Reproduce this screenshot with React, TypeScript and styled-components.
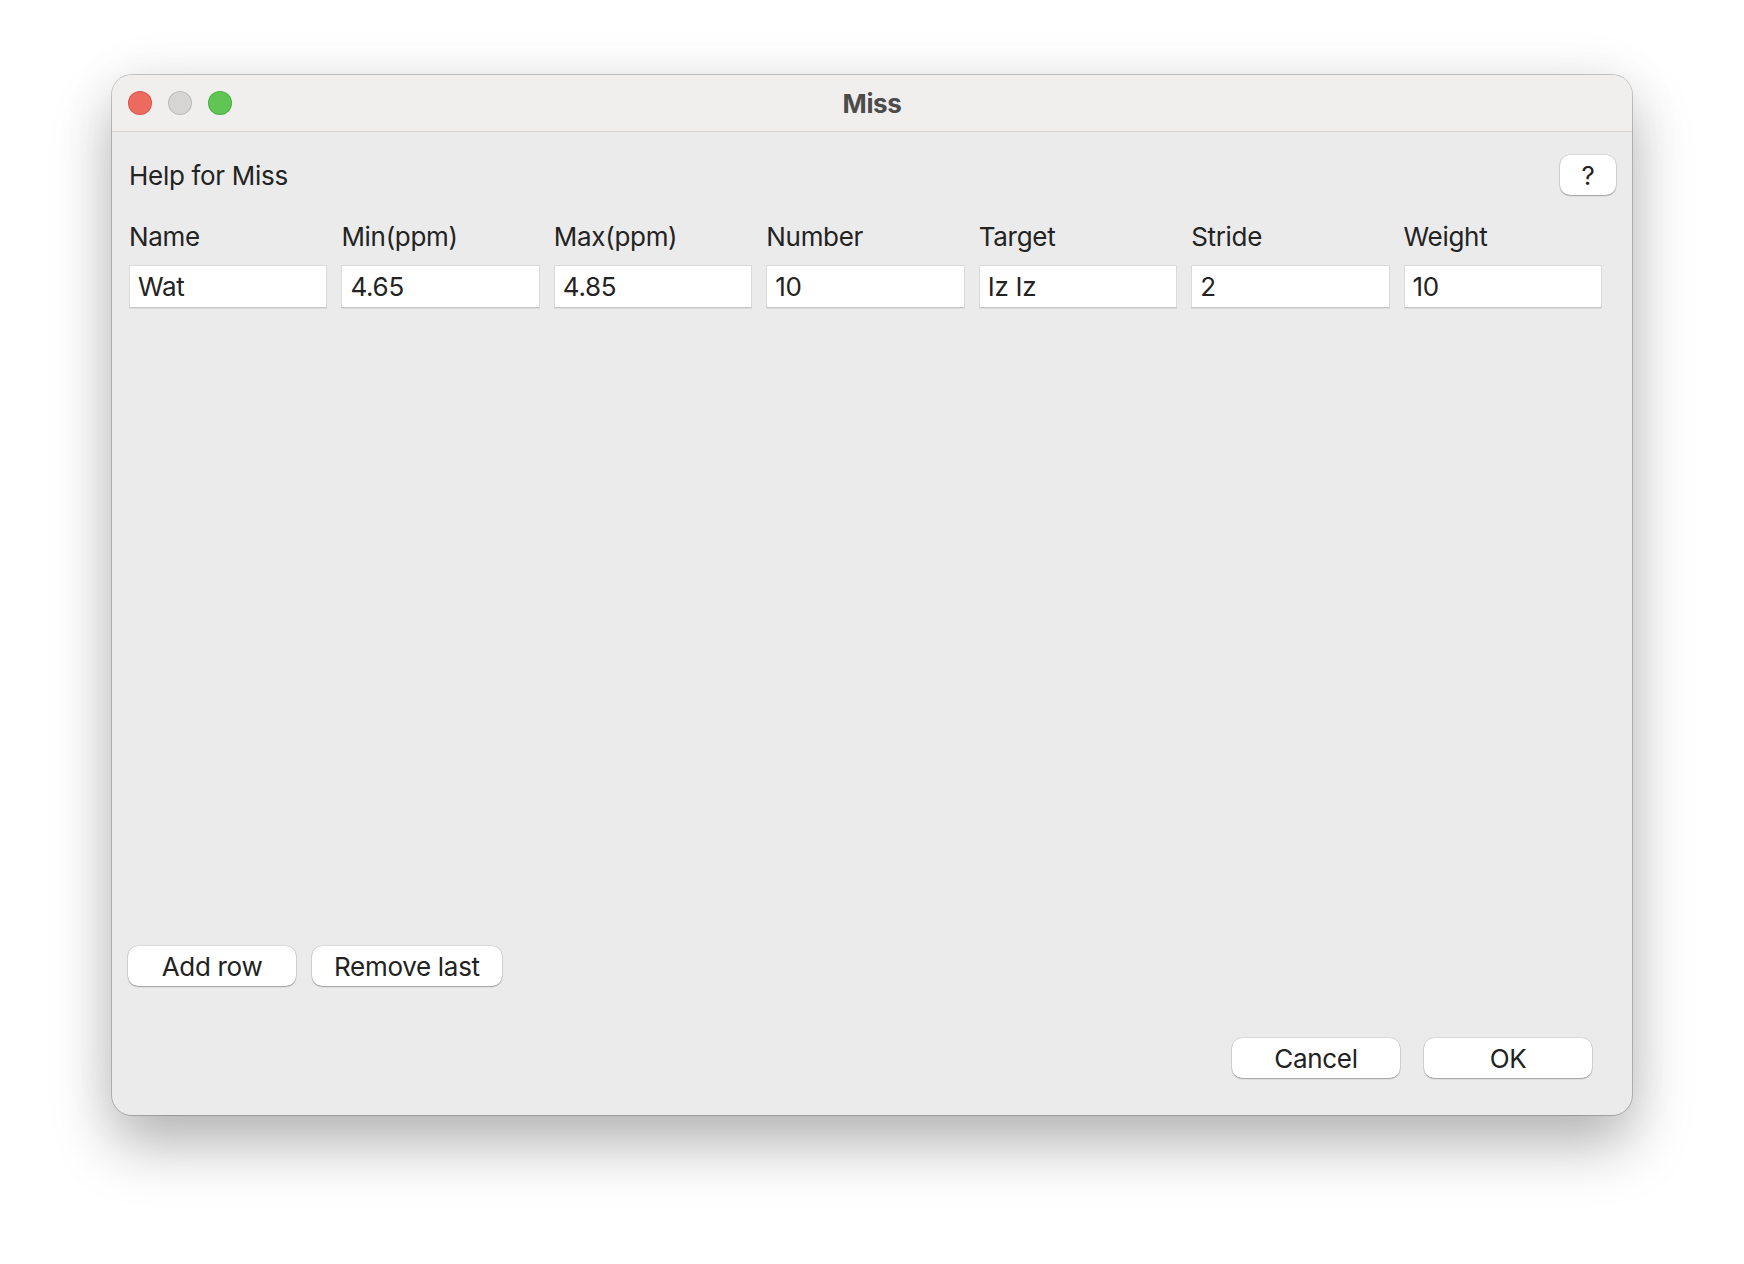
import React from 'react';
import styled, {createGlobalStyle} from 'styled-components';

type Column = {
    label: string;
    value: string;
};

const columns: Column[] = [
    {label: 'Name', value: 'Wat'},
    {label: 'Min(ppm)', value: '4.65'},
    {label: 'Max(ppm)', value: '4.85'},
    {label: 'Number', value: '10'},
    {label: 'Target', value: 'Iz Iz'},
    {label: 'Stride', value: '2'},
    {label: 'Weight', value: '10'},
];

const GlobalStyle = createGlobalStyle`
    html, body {
        margin: 0;
        padding: 0;
        background: #ffffff;
    }
    body {
        font-family: Inter, 'Noto Sans', 'Liberation Sans', sans-serif;
        -webkit-font-smoothing: antialiased;
    }
`;

const Desktop = styled.div`
    display: flex;
    width: 1744px;
    height: 1264px;
    padding: 75px 0 0 112px;
    box-sizing: border-box;
    background: #ffffff;
`;

const Window = styled.div`
    display: flex;
    flex-direction: column;
    width: 1520px;
    height: 1040px;
    border-radius: 20px;
    overflow: hidden;
    background: #ebebeb;
    box-shadow: 0 0 0 1px rgba(0, 0, 0, 0.2), 0 30px 60px rgba(0, 0, 0, 0.28), 0 0 60px rgba(0, 0, 0, 0.06);
`;

const TitleBar = styled.div`
    display: flex;
    align-items: center;
    height: 56px;
    padding-left: 16px;
    background: #f0efee;
    border-bottom: 1px solid #d3d3d3;
    flex-shrink: 0;
`;

const Lights = styled.div`
    display: flex;
    gap: 16px;
`;

const Light = styled.span<{$color: string; $edge: string}>`
    width: 24px;
    height: 24px;
    border-radius: 50%;
    background: ${(p) => p.$color};
    box-shadow: inset 0 0 0 1px ${(p) => p.$edge};
`;

// balances the traffic lights so the title sits on the window's centre line
const Title = styled.div`
    flex: 1;
    margin-right: 120px;
    text-align: center;
    font-size: 26px;
    font-weight: 700;
    color: #4c4c4c;
    letter-spacing: -0.4px;
`;

const Body = styled.div`
    display: flex;
    flex-direction: column;
    flex: 1;
    padding: 23px 16px 37px 17px;
    color: #232323;
    font-size: 26px;
    line-height: 32px;
    letter-spacing: -0.3px;
`;

const HeaderRow = styled.div`
    display: flex;
    align-items: center;
    justify-content: space-between;
`;

const HelpText = styled.div`
    padding-top: 2px;
`;

const Button = styled.button<{$wide?: boolean}>`
    height: 40px;
    min-width: ${(p) => (p.$wide ? '168px' : '56px')};
    padding: 0 22px;
    border: none;
    border-radius: 10px;
    background: #ffffff;
    color: #222222;
    font-family: inherit;
    font-size: 26px;
    letter-spacing: -0.3px;
    box-shadow: 0 0 0 0.5px rgba(0, 0, 0, 0.14), 0 1px 1.5px rgba(0, 0, 0, 0.28);
`;

const HelpButton = styled(Button)`
    width: 56px;
    padding: 0;
`;

const FieldGrid = styled.div`
    display: grid;
    width: 1473px;
    grid-template-columns: repeat(7, 1fr);
    column-gap: 14px;
`;

const Labels = styled(FieldGrid)`
    margin-top: 26px;
`;

const Inputs = styled(FieldGrid)`
    margin-top: 12px;
`;

const Field = styled.input`
    height: 43px;
    min-width: 0;
    box-sizing: border-box;
    margin: 0;
    padding: 0 8px;
    border: 1px solid #dadada;
    border-bottom-color: #c4c4c4;
    border-radius: 0;
    background: #ffffff;
    color: #232323;
    font-family: inherit;
    font-size: 26px;
    letter-spacing: -0.3px;
    box-shadow: 0 1px 0 rgba(0, 0, 0, 0.06);
    outline: none;
`;

const Spacer = styled.div`
    flex: 1;
`;

const RowActions = styled.div`
    display: flex;
    gap: 16px;
    margin-left: -1px;
`;

const DialogActions = styled.div`
    display: flex;
    justify-content: flex-end;
    gap: 24px;
    margin-top: 52px;
    padding-right: 24px;
`;

const App = (): JSX.Element => {
    return (
        <>
            <GlobalStyle/>
            <Desktop>
                <Window>
                    <TitleBar>
                        <Lights>
                            <Light
                                $color='#ec6a5e'
                                $edge='rgba(180, 60, 50, 0.35)'
                            />
                            <Light
                                $color='#d6d5d4'
                                $edge='rgba(0, 0, 0, 0.12)'
                            />
                            <Light
                                $color='#61c554'
                                $edge='rgba(40, 140, 40, 0.35)'
                            />
                        </Lights>
                        <Title>{'Miss'}</Title>
                    </TitleBar>
                    <Body>
                        <HeaderRow>
                            <HelpText>{'Help for Miss'}</HelpText>
                            <HelpButton>{'?'}</HelpButton>
                        </HeaderRow>
                        <Labels>
                            {columns.map((col) => (
                                <div key={col.label}>{col.label}</div>
                            ))}
                        </Labels>
                        <Inputs>
                            {columns.map((col) => (
                                <Field
                                    key={col.label}
                                    defaultValue={col.value}
                                />
                            ))}
                        </Inputs>
                        <Spacer/>
                        <RowActions>
                            <Button $wide={true}>{'Add row'}</Button>
                            <Button $wide={true}>{'Remove last'}</Button>
                        </RowActions>
                        <DialogActions>
                            <Button $wide={true}>{'Cancel'}</Button>
                            <Button $wide={true}>{'OK'}</Button>
                        </DialogActions>
                    </Body>
                </Window>
            </Desktop>
        </>
    );
};

export default App;
